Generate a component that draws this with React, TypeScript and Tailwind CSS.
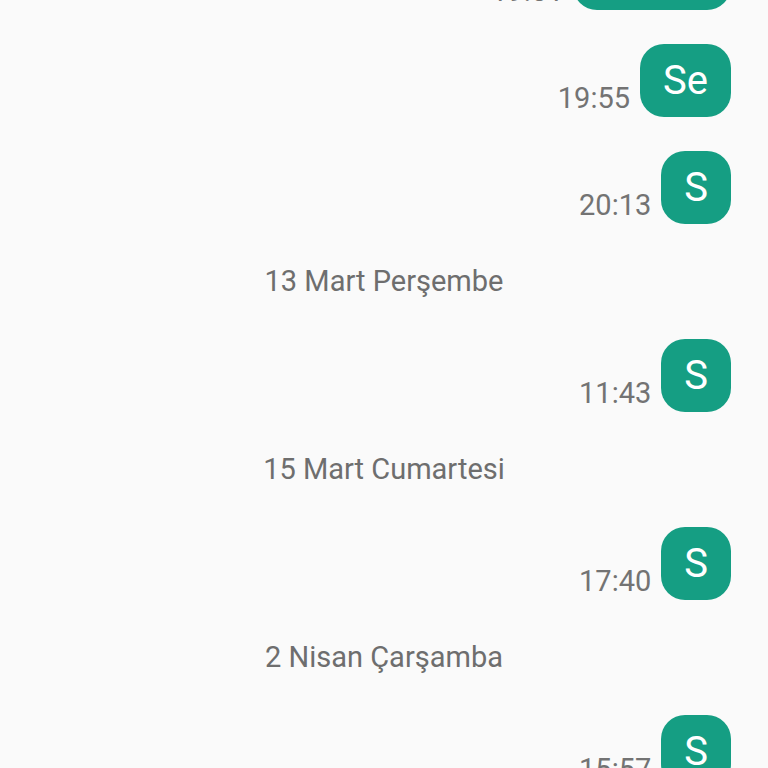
import React from "react";

type Item =
  | { kind: "msg"; id: string; text: string; time: string }
  | { kind: "date"; id: string; label: string };

const items: Item[] = [
  { kind: "msg", id: "m1", text: "Selam", time: "19:51" },
  { kind: "msg", id: "m2", text: "Se", time: "19:55" },
  { kind: "msg", id: "m3", text: "S", time: "20:13" },
  { kind: "date", id: "d1", label: "13 Mart Perşembe" },
  { kind: "msg", id: "m4", text: "S", time: "11:43" },
  { kind: "date", id: "d2", label: "15 Mart Cumartesi" },
  { kind: "msg", id: "m5", text: "S", time: "17:40" },
  { kind: "date", id: "d3", label: "2 Nisan Çarşamba" },
  { kind: "msg", id: "m6", text: "S", time: "15:57" },
];

export default function App() {
  return (
    <div
      className="w-[768px] h-[768px] overflow-hidden bg-[#fafafa]"
      style={{ fontFamily: "Roboto, 'Noto Sans', sans-serif" }}
    >
      <div className="flex flex-col -mt-[63px] pr-[37px]">
        {items.map((item, i) => {
          if (item.kind === "date") {
            return (
              <div key={item.id} className="h-[115px] flex items-center justify-center pl-[37px]">
                <span className="text-[29px] text-[#6e6e6e] leading-none">{item.label}</span>
              </div>
            );
          }
          const prev = items[i - 1];
          return (
            <div
              key={item.id}
              className={`flex justify-end items-end gap-[10px] ${prev && prev.kind === "msg" ? "mt-[34px]" : ""}`}
            >
              <span className="text-[29px] text-[#737373] leading-none mb-[4px]">{item.time}</span>
              <div className="h-[73px] rounded-[24px] bg-[#159e83] px-[23px] flex items-center">
                <span className="text-[40px] text-white leading-none">{item.text}</span>
              </div>
            </div>
          );
        })}
      </div>
    </div>
  );
}
